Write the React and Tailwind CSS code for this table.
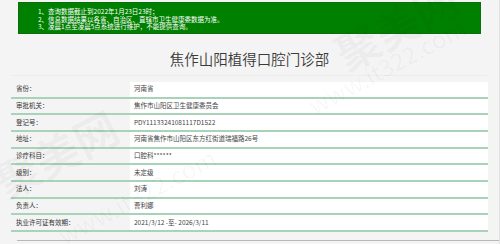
import React from "react";

const notices = [
    "1、查询数据截止到2022年1月23日23时；",
    "2、信息数据结果以各省、自治区、直辖市卫生健康委数据为准。",
    "3、凌晨1点至凌晨5点系统进行维护，不能提供查询。",
];

const rows = [
    ["省份：", "河南省"],
    ["审批机关：", "焦作市山阳区卫生健康委员会"],
    ["登记号：", "PDY11133241081117D1522"],
    ["地址：", "河南省焦作市山阳区东方红街道瑞福路26号"],
    ["诊疗科目：", "口腔科******"],
    ["级别：", "未定级"],
    ["法人：", "刘涛"],
    ["负责人：", "曹利娜"],
    ["执业许可证有效期：", "2021/3/12 -至- 2026/3/11"],
];

export default function App() {
    return (
        <div
            className="relative w-[500px] h-[244px] overflow-hidden bg-[#f4f4f4] text-[#333] border-r border-[#e2e2e2]"
            style={{ fontFamily: '"Noto Sans CJK SC", "Noto Sans", sans-serif' }}
        >
            {/* 提示框 */}
            <div className="mx-[18px] mt-[2px] w-[463px] h-[32px] bg-[#008000] border border-[#0a6e0a] pl-[19px] pt-[5px] text-white text-[6.5px] leading-[7.6px]">
                {notices.map((n) => (
                    <p key={n}>{n}</p>
                ))}
            </div>

            {/* 标题 */}
            <h1 className="mt-[16px] text-center text-[14.5px] leading-[18px] text-[#3a3a3a] font-[350]">
                焦作山阳植得口腔门诊部
            </h1>
            <div className="mx-[12px] mt-[7px] h-px bg-[#ececec]" />

            {/* 信息表 */}
            <div className="ml-[11px] mt-[6px] w-[477px]">
                {rows.map(([label, value]) => (
                    <div
                        key={label}
                        className="flex h-[16.67px] border-b-2 border-[#a8d3b8] text-[6.5px]"
                    >
                        <div className="w-[119px] pl-[5px] flex items-center">
                            {label}
                        </div>
                        <div className="flex-1 bg-white pl-[4px] flex items-center text-[#444]">
                            {value}
                        </div>
                    </div>
                ))}
            </div>

            <div className="ml-[17px] mt-[8px] h-px bg-[#b8b8b8]" />

            {/* 水印 */}
            <div className="pointer-events-none absolute left-[330px] top-[-8px] -rotate-[28deg] text-[44px] text-black/[0.035] font-bold">
                聚美网
            </div>
            <div className="pointer-events-none absolute left-[300px] top-[48px] -rotate-[28deg] text-[24px] text-black/[0.035]">
                www.it322.com
            </div>
            <div className="pointer-events-none absolute left-[-10px] top-[120px] -rotate-[28deg] text-[44px] text-black/[0.035] font-bold">
                聚美网
            </div>
            <div className="pointer-events-none absolute left-[50px] top-[178px] -rotate-[28deg] text-[24px] text-black/[0.035]">
                www.it322.com
            </div>
        </div>
    );
}
